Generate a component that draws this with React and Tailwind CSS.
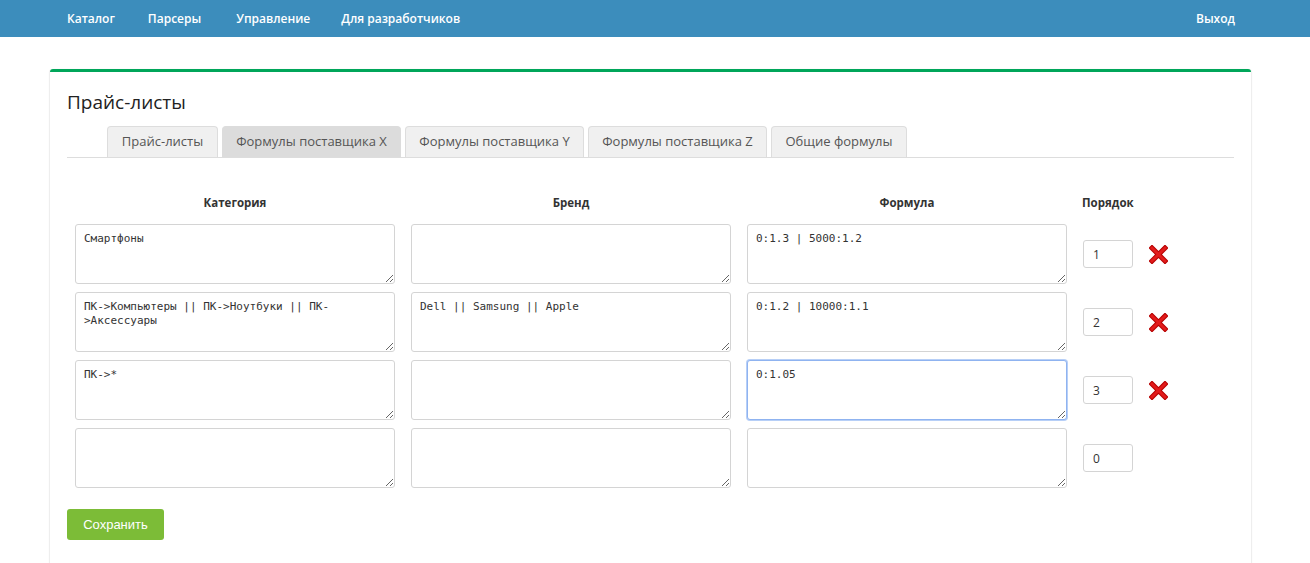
import React from "react";

const navItems = [
  { label: "Каталог", ml: "ml-0" },
  { label: "Парсеры", ml: "ml-[33px]" },
  { label: "Управление", ml: "ml-[35px]" },
  { label: "Для разработчиков", ml: "ml-[31px]" },
];

const tabs = [
  { label: "Прайс-листы", w: "w-[111px]" },
  { label: "Формулы поставщика X", w: "w-[179px]", active: true },
  { label: "Формулы поставщика Y", w: "w-[179px]" },
  { label: "Формулы поставщика Z", w: "w-[179px]" },
  { label: "Общие формулы", w: "w-[136px]" },
];

const rows = [
  { cat: "Смартфоны", brand: "", formula: "0:1.3 | 5000:1.2", order: "1", del: true },
  { cat: "ПК->Компьютеры || ПК->Ноутбуки || ПК->Аксессуары", brand: "Dell || Samsung || Apple", formula: "0:1.2 | 10000:1.1", order: "2", del: true },
  { cat: "ПК->*", brand: "", formula: "0:1.05", order: "3", del: true, focus: true },
  { cat: "", brand: "", formula: "", order: "0", del: false },
];

function RedCross() {
  return (
    <svg width="19" height="19" viewBox="0 0 19 19">
      <path d="M3 3 L16 16 M16 3 L3 16" stroke="#b50000" strokeWidth="5" strokeLinecap="square" />
      <path d="M3 3 L16 16 M16 3 L3 16" stroke="#e21b1b" strokeWidth="3" strokeLinecap="square" />
    </svg>
  );
}

function Area({ value, focus }) {
  return (
    <textarea
      defaultValue={value}
      spellCheck={false}
      className={
        "block w-[320px] h-[60px] rounded-[3px] bg-white px-[8px] py-[7px] text-[11px] leading-[14px] text-[#333] outline-none font-['DejaVu_Sans_Mono',monospace] " +
        (focus ? "border border-[#8fb3f0] shadow-[0_0_0_1px_#b7cff7]" : "border border-[#d4d4d4]")
      }
    />
  );
}

export default function App() {
  return (
    <div className="min-h-[563px] bg-white font-['Open_Sans',sans-serif] text-[#333]">
      {/* Navbar */}
      <div className="h-[37px] bg-[#3c8dbc] flex items-center justify-between pl-[67px] pr-[75px]">
        <div className="flex">
          {navItems.map((n) => (
            <span key={n.label} className={"text-white text-[12px] font-semibold " + n.ml}>{n.label}</span>
          ))}
        </div>
        <span className="text-white text-[12px] font-semibold">Выход</span>
      </div>

      {/* Card */}
      <div className="pt-[32px] px-[50px] pr-[59px]">
        <div className="rounded-[3px] border-t-[3px] border-[#00a65a] bg-white shadow-[0_1px_2px_rgba(0,0,0,0.12),-1px_0_1px_rgba(0,0,0,0.04),1px_0_1px_rgba(0,0,0,0.04)] px-[17px] pb-[30px]">
          <h1 className="pt-[17px] text-[19px] leading-[26px] text-[#222]">Прайс-листы</h1>

          {/* Tabs */}
          <div className="mt-[11px] flex gap-[4px] pl-[40px] border-b border-[#ddd]">
            {tabs.map((t) => (
              <div
                key={t.label}
                className={
                  "h-[31px] flex items-center justify-center rounded-t-[4px] border border-b-0 text-[13px] text-[#555] " +
                  t.w + " " +
                  (t.active ? "bg-[#dcdcdc] border-[#dcdcdc]" : "bg-[#f0f0f0] border-[#ddd]")
                }
              >
                {t.label}
              </div>
            ))}
          </div>

          {/* Table header */}
          <div className="mt-[36px] pl-[8px] grid grid-cols-[320px_320px_320px_50px_30px] gap-x-[16px] items-center h-[18px]">
            <div className="text-center text-[11.5px] font-bold">Категория</div>
            <div className="text-center text-[11.5px] font-bold">Бренд</div>
            <div className="text-center text-[11.5px] font-bold">Формула</div>
            <div className="text-[11.5px] font-bold whitespace-nowrap -ml-[1px]">Порядок</div>
            <div />
          </div>

          {/* Table rows */}
          <div className="mt-[12px] pl-[8px] grid grid-cols-[320px_320px_320px_50px_30px] gap-x-[16px] gap-y-[8px] items-center">
            {rows.map((r, i) => (
              <React.Fragment key={i}>
                <Area value={r.cat} />
                <Area value={r.brand} />
                <Area value={r.formula} focus={r.focus} />
                <input
                  defaultValue={r.order}
                  className="w-[50px] h-[28px] rounded-[3px] border border-[#d4d4d4] px-[9px] text-[12px] text-[#333] outline-none font-['Open_Sans',sans-serif]"
                />
                <div className="flex items-center">{r.del && <RedCross />}</div>
              </React.Fragment>
            ))}
          </div>

          <button className="mt-[21px] h-[31px] w-[97px] rounded-[3px] bg-[#7cbc37] text-white text-[13px] font-['Liberation_Sans',sans-serif]">
            Сохранить
          </button>
        </div>
      </div>
    </div>
  );
}
